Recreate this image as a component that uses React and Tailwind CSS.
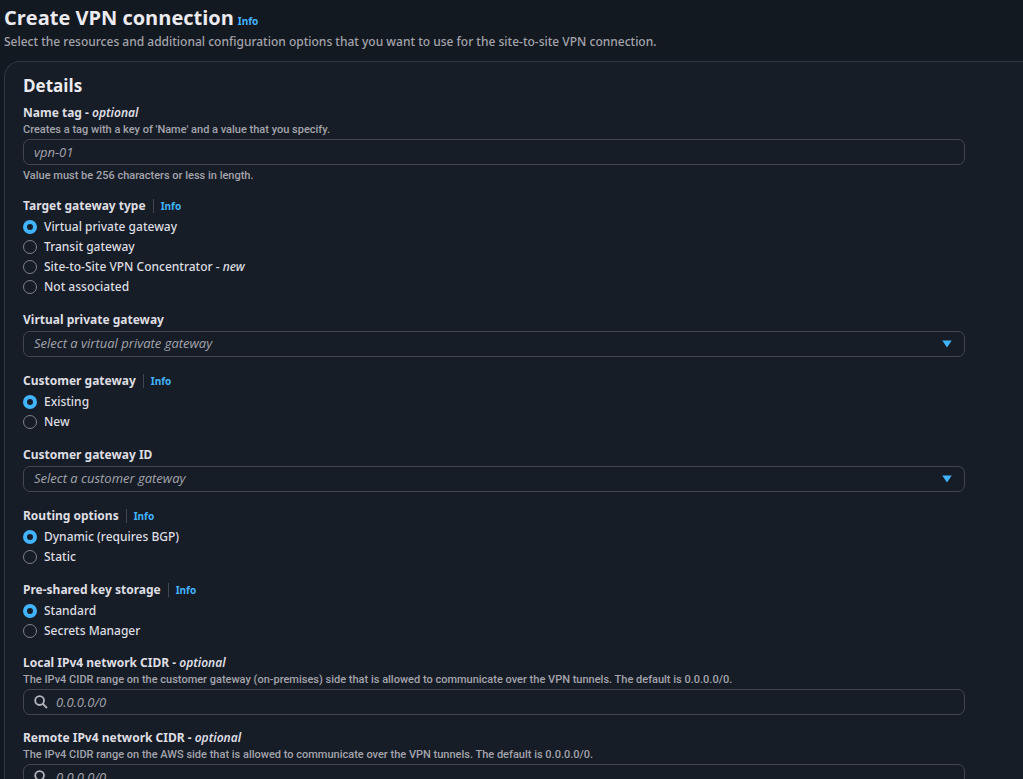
import { useState } from 'react'

const GATEWAY_TYPES = [
  { value: 'vgw', label: 'Virtual private gateway' },
  { value: 'tgw', label: 'Transit gateway' },
  { value: 'concentrator', label: 'Site-to-Site VPN Concentrator', tag: 'new' },
  { value: 'none', label: 'Not associated' },
]

const CUSTOMER_GATEWAY = [
  { value: 'existing', label: 'Existing' },
  { value: 'new', label: 'New' },
]

const ROUTING = [
  { value: 'dynamic', label: 'Dynamic (requires BGP)' },
  { value: 'static', label: 'Static' },
]

const KEY_STORAGE = [
  { value: 'standard', label: 'Standard' },
  { value: 'secrets', label: 'Secrets Manager' },
]

function InfoLink() {
  return (
    <a href="#info" className="text-[10px] font-bold text-[#42b4ff] hover:text-[#75cfff]">
      Info
    </a>
  )
}

function FieldLabel({ htmlFor, optional, children }) {
  return (
    <label htmlFor={htmlFor} className="block text-[12px] leading-[18px] font-bold text-[#dedee3]">
      {children}
      {optional && (
        <>
          {' - '}
          <em className="font-semibold">optional</em>
        </>
      )}
    </label>
  )
}

function Hint({ id, children }) {
  return (
    <p id={id} className="-mb-px pt-px font-[Roboto,sans-serif] text-[11px] leading-[14px] font-medium text-[#a4a4ad]">
      {children}
    </p>
  )
}

function RadioGroup({ name, legend, options }) {
  const [value, setValue] = useState(options[0].value)

  return (
    <div role="radiogroup" aria-labelledby={`${name}-legend`} className="-mb-px pt-px">
      <div className="flex h-[18px] items-center">
        <span
          id={`${name}-legend`}
          className="mr-[7px] border-r border-[#424650] pr-[7px] text-[12px] leading-[14px] font-bold text-[#dedee3]"
        >
          {legend}
        </span>
        <InfoLink />
      </div>
      <div className="mt-0.5">
        {options.map(opt => (
          <label key={opt.value} className="flex h-5 items-center gap-[7px] text-[12px] font-medium text-[#dedee3]">
            <input
              type="radio"
              name={name}
              value={opt.value}
              checked={value === opt.value}
              onChange={() => setValue(opt.value)}
              className="size-3.5 shrink-0 appearance-none rounded-full border border-[#7d8089]
                         checked:border-4 checked:border-[#42b4ff]"
            />
            <span>
              {opt.label}
              {opt.tag && (
                <>
                  {' - '}
                  <em>{opt.tag}</em>
                </>
              )}
            </span>
          </label>
        ))}
      </div>
    </div>
  )
}

function SelectField({ id, label, placeholder }) {
  return (
    <div className="pt-px">
      <FieldLabel htmlFor={id}>{label}</FieldLabel>
      <div className="relative mt-0.5">
        <select
          id={id}
          defaultValue=""
          className="block h-[26px] w-full appearance-none rounded-[7px] border border-[#424650] bg-[#161d26]
                     px-2.5 font-['Open_Sans',sans-serif] text-[13px] text-[#a4a4ad] italic outline-none
                     focus:border-[#42b4ff]"
        >
          <option value="">{placeholder}</option>
        </select>
        <svg
          viewBox="0 0 10 8"
          className="pointer-events-none absolute top-[9px] right-[13px] h-2 w-2.5 fill-[#42b4ff]"
          aria-hidden="true"
        >
          <path d="M.3.5h9.4L5 7.6z" />
        </svg>
      </div>
    </div>
  )
}

function CidrField({ id, label, hint }) {
  return (
    <div>
      <FieldLabel htmlFor={id} optional>{label}</FieldLabel>
      <Hint id={`${id}-hint`}>{hint}</Hint>
      <div className="relative mt-[3px]">
        <svg
          viewBox="0 0 14 14"
          className="pointer-events-none absolute top-[6px] left-[11px] size-3.5 fill-none stroke-[#b4b4bb]"
          strokeWidth="1.8"
          aria-hidden="true"
        >
          <circle cx="5.6" cy="5.6" r="4.4" />
          <path d="M8.8 8.8l4.2 4.2" />
        </svg>
        <input
          id={id}
          type="text"
          placeholder="0.0.0.0/0"
          aria-describedby={`${id}-hint`}
          className="block h-[26px] w-full rounded-[7px] border border-[#424650] bg-transparent pr-2.5 pl-8
                     font-['Open_Sans',sans-serif] text-[13px] text-[#dedee3] outline-none
                     placeholder:text-[#a4a4ad] placeholder:italic focus:border-[#42b4ff]"
        />
      </div>
    </div>
  )
}

export default function App() {
  return (
    <main className="flex h-screen flex-col overflow-hidden bg-[#131920] pl-1 font-['Noto_Sans',sans-serif]">
      <header>
        <div className="flex items-baseline gap-1 pt-1">
          <h1 className="font-['Open_Sans',sans-serif] text-[20px] leading-7 font-bold text-[#ebebf0]">
            Create VPN connection
          </h1>
          <InfoLink />
        </div>
        <p className="text-[12px] leading-5 font-medium text-[#a4a4ad]">
          Select the resources and additional configuration options that you want to use for the site-to-site VPN
          connection.
        </p>
      </header>

      <section className="mt-[9px] grow rounded-tl-2xl border-t border-l border-[#2f3742] bg-[#161d26] pt-3 pr-[58px] pl-[18px]">
        <h2 className="mb-[6px] font-['Open_Sans',sans-serif] text-[17px] leading-6 font-bold text-[#ebebf0]">
          Details
        </h2>

        <form className="flex flex-col gap-3.5" onSubmit={(e) => e.preventDefault()}>
          <div>
            <FieldLabel htmlFor="name-tag" optional>Name tag</FieldLabel>
            <Hint id="name-tag-hint">Creates a tag with a key of 'Name' and a value that you specify.</Hint>
            <input
              id="name-tag"
              type="text"
              placeholder="vpn-01"
              maxLength={256}
              aria-describedby="name-tag-hint"
              className="my-[3px] block h-[26px] w-full rounded-[7px] border border-[#424650] bg-transparent px-2.5
                         font-['Open_Sans',sans-serif] text-[13px] text-[#dedee3] outline-none
                         placeholder:text-[#a4a4ad] placeholder:italic focus:border-[#42b4ff]"
            />
            <Hint>Value must be 256 characters or less in length.</Hint>
          </div>

          <RadioGroup name="gateway-type" legend="Target gateway type" options={GATEWAY_TYPES} />
          <SelectField id="vgw" label="Virtual private gateway" placeholder="Select a virtual private gateway" />
          <RadioGroup name="customer-gateway" legend="Customer gateway" options={CUSTOMER_GATEWAY} />
          <SelectField id="cgw-id" label="Customer gateway ID" placeholder="Select a customer gateway" />
          <RadioGroup name="routing" legend="Routing options" options={ROUTING} />
          <RadioGroup name="key-storage" legend="Pre-shared key storage" options={KEY_STORAGE} />
          <CidrField
            id="local-cidr"
            label="Local IPv4 network CIDR"
            hint="The IPv4 CIDR range on the customer gateway (on-premises) side that is allowed to communicate over the VPN tunnels. The default is 0.0.0.0/0."
          />
          <CidrField
            id="remote-cidr"
            label="Remote IPv4 network CIDR"
            hint="The IPv4 CIDR range on the AWS side that is allowed to communicate over the VPN tunnels. The default is 0.0.0.0/0."
          />
        </form>
      </section>
    </main>
  )
}
